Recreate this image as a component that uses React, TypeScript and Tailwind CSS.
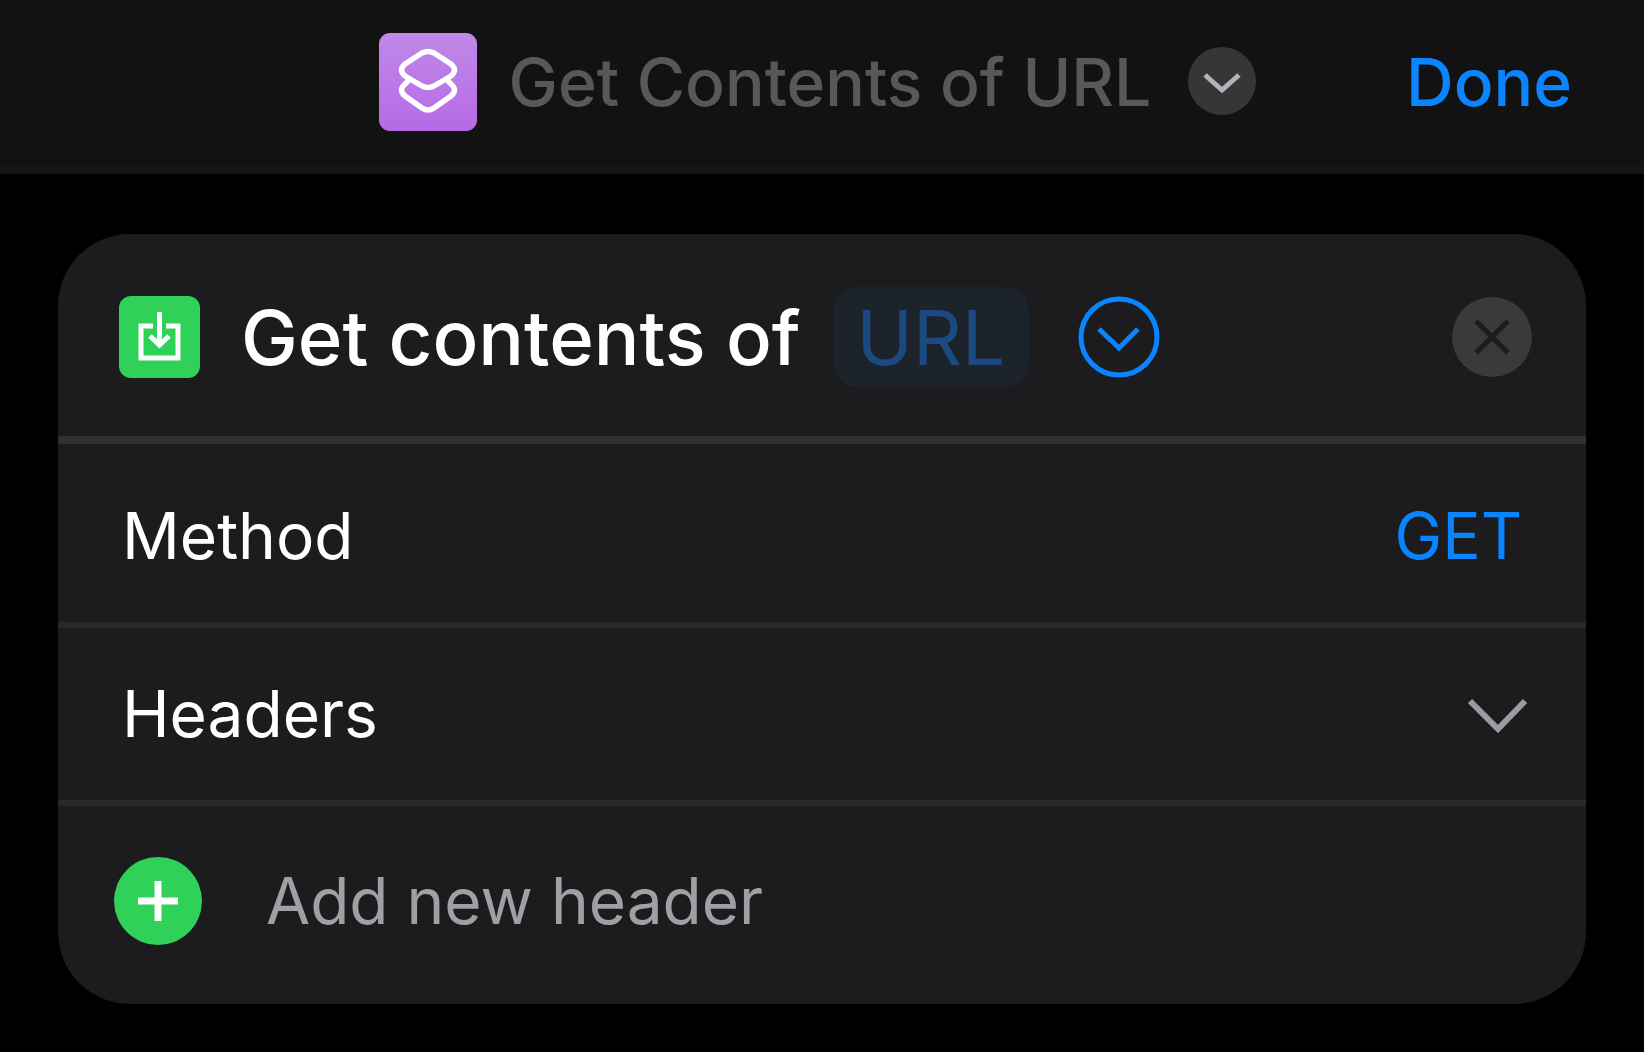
function ShortcutsIcon() {
  return (
    <svg viewBox="0 0 98 98" className="size-[98px] shrink-0" aria-hidden="true">
      <defs>
        <linearGradient id="purple" x1="0" y1="0" x2="0" y2="1">
          <stop offset="0" stopColor="#c088e8" />
          <stop offset="1" stopColor="#b66ae6" />
        </linearGradient>
      </defs>
      <rect width="98" height="98" rx="11" fill="url(#purple)" />
      <g fill="none" stroke="#ffffff" strokeWidth="5.5" strokeLinejoin="round" strokeLinecap="round">
        <path d="M43 20Q49 17 55 20L72 31Q79 37 72 43L55 53Q49 56 43 53L26 43Q19 37 26 31Z" />
        <path d="M30 47L26 51Q19 57 26 63L43 75Q49 79 55 75L72 63Q79 57 72 51L68 47" />
      </g>
    </svg>
  );
}

function DownloadIcon() {
  return (
    <svg viewBox="0 0 82 84" className="h-[84px] w-[82px] shrink-0" aria-hidden="true">
      <rect y="1" width="81" height="82" rx="12" fill="#30d158" />
      <g fill="none" stroke="#ffffff" strokeWidth="5">
        <path d="M34 31H22V63H59V31H47" />
        <path d="M40.500 17V49" />
        <path d="M31 41L40.500 50L50 41" />
      </g>
    </svg>
  );
}

export default function App() {
  return (
    <div className="min-h-screen bg-black pb-12 font-['Inter',sans-serif] text-white">
      <header className="grid h-[174px] grid-cols-[1fr_auto_1fr] items-center border-b-8 border-[#161616] bg-[#121212] pr-2 pb-0.5">
        <div />
        <div className="flex items-center">
          <ShortcutsIcon />
          <h1 className="ml-8 text-[66px] leading-[80px] font-medium whitespace-nowrap text-[#58585a]">
            Get Contents of URL
          </h1>
          <button type="button" aria-label="Shortcut options" className="ml-9 shrink-0">
            <svg viewBox="0 0 70 70" className="size-[70px]" aria-hidden="true">
              <circle cx="35" cy="34" r="34" fill="#363638" />
              <path d="M18 28L35 43L52 28" fill="none" stroke="#b4b4b8" strokeWidth="5" />
            </svg>
          </button>
        </div>
        <button
          type="button"
          className="mr-16 justify-self-end text-[66px] leading-[80px] font-medium text-[#0a84ff]"
        >
          Done
        </button>
      </header>

      <main className="mx-[58px] mt-[60px] overflow-hidden rounded-[72px] bg-[#1c1c1e]">
        <div className="flex h-[202px] items-center pt-1 pr-[52px] pl-[61px]">
          <DownloadIcon />
          <h2 className="ml-10 text-[76px] leading-[88px] font-medium whitespace-nowrap">Get contents of</h2>
          <button
            type="button"
            className="ml-8 h-[100px] w-[196px] shrink-0 rounded-3xl bg-[#1c232b] text-[76px] leading-[88px] text-[#1a4a80]"
          >
            URL
          </button>
          <button type="button" aria-label="Collapse details" className="ml-12 shrink-0">
            <svg viewBox="0 0 84 84" className="size-[84px]" aria-hidden="true">
              <g fill="none" stroke="#0a84ff" strokeWidth="5">
                <circle cx="42" cy="42" r="38" />
                <path d="M22 34L42 53L61 34" />
              </g>
            </svg>
          </button>
          <button type="button" aria-label="Remove action" className="ml-auto shrink-0">
            <svg viewBox="0 0 84 84" className="size-[84px]" aria-hidden="true">
              <circle cx="42" cy="42" r="40" fill="#3a3a3c" />
              <path d="M26 26L58 58M58 26L26 58" stroke="#1c1c1e" strokeWidth="5" />
            </svg>
          </button>
        </div>
        <div className="flex h-[186px] items-center justify-between border-t-8 border-[#303032] px-16 pt-1.5">
          <span className="text-[64px] leading-[80px]">Method</span>
          <button type="button" className="text-[64px] leading-[80px] text-[#0a84ff]">
            GET
          </button>
        </div>
        <button
          type="button"
          aria-expanded="true"
          className="flex h-[178px] w-full items-center justify-between border-t-6 border-[#29292b] pr-14 pl-16"
        >
          <span className="text-[64px] leading-[80px]">Headers</span>
          <svg viewBox="0 0 66 40" className="h-10 w-[66px]" aria-hidden="true">
            <path d="M6 7L34 35L61 7" fill="none" stroke="#9c9ca0" strokeWidth="6" />
          </svg>
        </button>
        <button type="button" className="flex h-[204px] w-full items-center border-t-6 border-[#29292b] px-14 pb-2">
          <svg viewBox="0 0 88 88" className="size-[88px] shrink-0" aria-hidden="true">
            <circle cx="44" cy="44" r="44" fill="#30d158" />
            <path d="M24 44H64M44 24V64" stroke="#ffffff" strokeWidth="7" />
          </svg>
          <span className="ml-16 text-[64px] leading-[80px] text-[#a0a0a4]">Add new header</span>
        </button>
      </main>
    </div>
  );
}
